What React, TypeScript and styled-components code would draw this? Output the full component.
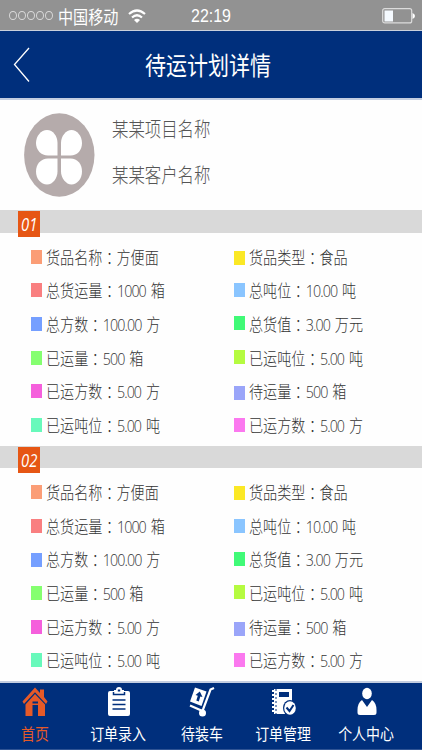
import React from "react";
import styled, { createGlobalStyle } from "styled-components";

const GlobalStyle = createGlobalStyle`
  * { box-sizing: border-box; }
  body { margin: 0; background: #fff; font-family: "Noto Sans CJK SC", sans-serif; }
`;

const Screen = styled.div`
  width: 422px;
  height: 750px;
  display: flex;
  flex-direction: column;
  background: #fefefe;
  overflow: hidden;
`;

/* Single line of text, condensed horizontally from its left edge. */
const Condensed = styled.span<{ $size: number; $scale: number; $weight?: number }>`
  display: inline-block;
  white-space: pre;
  font-size: ${(p) => p.$size}px;
  line-height: 24px;
  font-weight: ${(p) => p.$weight ?? 400};
  transform: scaleX(${(p) => p.$scale});
  transform-origin: left center;
`;

const StatusBar = styled.header`
  height: 31px;
  flex: none;
  display: grid;
  grid-template-columns: 58px 69.500px 63.500px 191px 1fr;
  align-items: center;
  background: #929292;
  border-bottom: 1px solid #c9d0dc;
  color: #fff;
  padding-top: 2px;
`;

const Signal = styled.div`
  display: flex;
  gap: 1.2px;
  padding: 0 0 1px 9px;
`;

const Dot = styled.i`
  width: 7.8px;
  height: 9px;
  border: 1px solid #d8d8d8;
  border-radius: 50%;
`;

const Clock = styled(Condensed)`
  font-family: "Liberation Sans", sans-serif;
`;

const TitleBar = styled.div`
  height: 69px;
  flex: none;
  display: grid;
  grid-template-columns: 145px 1fr;
  align-items: center;
  background: #002f7c;
  border-bottom: 2px solid #c3cde0;
  color: #fff;
  padding-bottom: 2px;
`;

const BackIcon = styled.svg`
  margin-left: 13px;
  margin-top: 2px;
`;

const Profile = styled.section`
  height: 110px;
  flex: none;
  display: flex;
  padding: 13px 0 0 24px;
`;

const ProfileNames = styled.div`
  display: flex;
  flex-direction: column;
  gap: 22px;
  margin: 4px 0 0 17px;
  color: #555;
`;

const Section = styled.section`
  height: 235.5px;
  flex: none;
`;

const Strip = styled.div`
  height: 22.5px;
  background: #d9d9d9;
  padding-left: 18px;
`;

const Badge = styled.div`
  position: relative;
  top: 1px;
  width: 22px;
  height: 26px;
  background: #e65614;
  color: #fff;
  padding: 1px 0 0 3px;
  font-family: "Open Sans", sans-serif;
  font-style: italic;
`;

const Details = styled.div`
  display: grid;
  grid-template-columns: 203px 1fr;
  grid-auto-rows: 33.7px;
  padding: 12px 0 0 30.6px;
`;

const Item = styled.div`
  height: 24px;
  display: flex;
  align-items: flex-start;
  color: #333;
`;

const Swatch = styled.i<{ $color: string; $drop: number }>`
  width: 11.6px;
  height: 14px;
  margin: ${(p) => 5 + p.$drop}px 3.6px 0 0;
  background: ${(p) => p.$color};
`;

const Colon = styled.span`
  font-family: "Noto Sans CJK TC", sans-serif;
  position: relative;
  top: 1px;
`;

const Digits = styled.span`
  font-family: "Open Sans", "Noto Sans CJK SC", sans-serif;
  font-weight: 300;
  font-size: 17px;
  line-height: 1;
  letter-spacing: -1.1px;
  margin: 0 2px 0 0.5px;
`;

const Tabs = styled.nav`
  flex: 1;
  display: grid;
  grid-template-columns: 70px 97px 70px 93px 73px;
  background: #002f7c;
  border-top: 2px solid #c3cde0;
  box-shadow: inset 0 -1px 0 #2f5494;
`;

const Tab = styled.div<{ $active?: boolean }>`
  display: flex;
  flex-direction: column;
  align-items: center;
  color: ${(p) => (p.$active ? "#e65a28" : "#fff")};
`;

const TabIcon = styled.svg`
  margin-top: 4px;
  flex: none;
`;

const TabLabel = styled.span`
  font-size: 16px;
  line-height: 24px;
  margin-top: 4px;
  white-space: nowrap;
  transform: scaleX(0.87);
`;

type Row = { label: string; num?: string; tail: string; color: string; drop?: number };

const rows: Row[] = [
  { label: "货品名称", tail: "方便面", color: "#fb9d76" },
  { label: "货品类型", tail: "食品", color: "#fbe825", drop: 1 },
  { label: "总货运量", num: "1000", tail: " 箱", color: "#f97f80" },
  { label: "总吨位", num: "10.00", tail: " 吨", color: "#8ac5ff" },
  { label: "总方数", num: "100.00", tail: " 方", color: "#759fff", drop: 0.5 },
  { label: "总货值", num: "3.00", tail: " 万元", color: "#40fa77", drop: -0.5 },
  { label: "已运量", num: "500", tail: " 箱", color: "#85ff70" },
  { label: "已运吨位", num: "5.00", tail: " 吨", color: "#b5fb40", drop: -1 },
  { label: "已运方数", num: "5.00", tail: " 方", color: "#f55fdc" },
  { label: "待运量", num: "500", tail: " 箱", color: "#9aa5f9", drop: 2 },
  { label: "已运吨位", num: "5.00", tail: " 吨", color: "#68f9bb" },
  { label: "已运方数", num: "5.00", tail: " 方", color: "#fb78ef" },
];

const Shipment = ({ no }: { no: string }) => (
  <Section>
    <Strip>
      <Badge>
        <Condensed $size={18.5} $scale={0.8} $weight={500}>{no}</Condensed>
      </Badge>
    </Strip>
    <Details>
      {rows.map((r, i) => (
        <Item key={i}>
          <Swatch $color={r.color} $drop={r.drop ?? 0} />
          <Condensed $size={16.8} $scale={0.84} $weight={300}>
            {r.label}
            <Colon lang="zh-TW">：</Colon>
            {r.num && <Digits>{r.num}</Digits>}
            {r.tail}
          </Condensed>
        </Item>
      ))}
    </Details>
  </Section>
);

const WifiIcon = () => (
  <svg width="18" height="15" viewBox="0 0 18 15" fill="none" stroke="#fff" strokeWidth="2.2">
    <path d="M1 5Q9-2 17 5M4 8.5Q9 4 14 8.5" />
    <path d="M6 11Q9 8.3 12 11L9 14Z" fill="#fff" stroke="none" />
  </svg>
);

const BatteryIcon = () => (
  <svg width="34" height="16" viewBox="0 0 34 16">
    <rect x=".7" y=".7" width="29" height="14.2" rx="2" fill="none" stroke="#dcdcdc" strokeWidth="1.2" />
    <rect x="2.5" y="2.5" width="8.5" height="11" fill="#f5faff" />
    <path d="M30.5 5Q33 6 33 8T30.5 11Z" fill="#fff" />
  </svg>
);

const LogoIcon = () => (
  <svg width="71" height="84" viewBox="0 0 71 84">
    <ellipse cx="35.3" cy="42" rx="35.2" ry="41.8" fill="#b5abab" />
    <g fill="#fff">
      <path d="M33.5 42.5H24C17 42.5 12 37 12 30S17 17 23 17 33.5 23 33.5 30Z" />
      <path d="M37 42.5H46.5C53.5 42.5 58 37 58 30S53 17 47.5 17 37 23 37 30Z" />
      <path d="M33.5 45.5H24C17 45.5 12 51 12 58.5S17 71.5 23 71.5 33.5 65 33.5 58.5Z" />
      <path d="M37 45.5H46.5C53.5 45.5 58 51 58 58.5S53 71.5 47.5 71.5 37 65 37 58.5Z" />
    </g>
  </svg>
);

const HomeIcon = () => (
  <TabIcon width="26" height="30" viewBox="0 0 26 30" fill="currentColor">
    <path d="M13 .5L18 6V2.500H22V10L25.500 14.500 24 17 13 5.200 2 17 .5 14.500Z" />
    <path fillRule="evenodd" d="M13 7L23 17.500V29H16V18H10.500V29H3.500V17.500ZM10.500 14.500V16.500H16V14.500Z" />
  </TabIcon>
);

const ClipboardIcon = () => (
  <TabIcon width="24" height="30" viewBox="0 0 24 30">
    <path fill="currentColor" fillRule="evenodd" d="M3 4H7V3H9Q9 0 12 0T15 3H17V4H21Q23 4 23 6V27Q23 29 21 29H3Q1 29 1 27V6Q1 4 3 4ZM10.8 2.5V4.5H13.2V2.5Z" />
    <path d="M6.5 5V7.5H17.5V5M5.5 13H18.5M5.5 17.5H18.5M5.5 22H18.5" fill="none" stroke="#002f7c" strokeWidth="1.5" />
  </TabIcon>
);

const TrolleyIcon = () => (
  <TabIcon width="26" height="30" viewBox="0 0 26 30">
    <path d="M6 .5L17.5 4.500 12.500 19 1 14.500Z" fill="currentColor" />
    <path d="M10.800 4.500L13.500 10 11.300 9.500 9.800 14.500 7.300 13.500 8.800 8.700 6.500 8Z" fill="#002f7c" />
    <path d="M25 1L21.500 2.500 13.500 24 1 18.500" fill="none" stroke="currentColor" strokeWidth="2.2" />
    <circle cx="13.5" cy="26" r="3.5" fill="currentColor" />
  </TabIcon>
);

const NotebookIcon = () => (
  <TabIcon width="26" height="30" viewBox="0 0 26 30">
    <path d="M3 2H21V15H14V27H3Z" fill="currentColor" />
    <path d="M1 4H5M1 8H5M1 12H5M1 16H5M1 20H5M1 24H5" stroke="currentColor" strokeWidth="2" />
    <path d="M5 2V27" stroke="#002f7c" strokeWidth="1" strokeDasharray="2 2" />
    <rect x="8" y="5" width="10" height="5" fill="#002f7c" />
    <ellipse cx="19" cy="21" rx="7" ry="8" fill="#002f7c" />
    <ellipse cx="19" cy="21" rx="5.8" ry="6.8" fill="currentColor" />
    <path d="M15.500 20.500L18.500 24 22.500 18" fill="none" stroke="#002f7c" strokeWidth="2" />
  </TabIcon>
);

const PersonIcon = () => (
  <TabIcon width="22" height="30" viewBox="0 0 22 30" fill="currentColor">
    <ellipse cx="11" cy="6.5" rx="4.8" ry="5.8" />
    <path d="M6 13L11 20 16 13Q20.5 16 20.5 23V25.5Q20.5 28 18 28H4Q1.5 28 1.5 25.5V23Q1.5 16 6 13Z" />
  </TabIcon>
);

export default function App() {
  return (
    <Screen>
      <GlobalStyle />
      <StatusBar>
        <Signal>
          {[0, 1, 2, 3, 4].map((n) => (
            <Dot key={n} />
          ))}
        </Signal>
        <Condensed $size={18} $scale={0.84}>中国移动</Condensed>
        <WifiIcon />
        <Clock $size={19} $scale={0.84}>22:19</Clock>
        <BatteryIcon />
      </StatusBar>
      <TitleBar>
        <BackIcon width="18" height="36" viewBox="0 0 18 36" fill="none" stroke="#fff" strokeWidth="1.3">
          <path d="M16 1L1.5 17.5 16 34.5" />
        </BackIcon>
        <Condensed $size={25} $scale={0.84}>待运计划详情</Condensed>
      </TitleBar>
      <Profile>
        <LogoIcon />
        <ProfileNames>
          <Condensed $size={20} $scale={0.82} $weight={300}>某某项目名称</Condensed>
          <Condensed $size={20} $scale={0.82} $weight={300}>某某客户名称</Condensed>
        </ProfileNames>
      </Profile>
      <Shipment no="01" />
      <Shipment no="02" />
      <Tabs>
        <Tab $active><HomeIcon /><TabLabel>首页</TabLabel></Tab>
        <Tab><ClipboardIcon /><TabLabel>订单录入</TabLabel></Tab>
        <Tab><TrolleyIcon /><TabLabel>待装车</TabLabel></Tab>
        <Tab><NotebookIcon /><TabLabel>订单管理</TabLabel></Tab>
        <Tab><PersonIcon /><TabLabel>个人中心</TabLabel></Tab>
      </Tabs>
    </Screen>
  );
}
